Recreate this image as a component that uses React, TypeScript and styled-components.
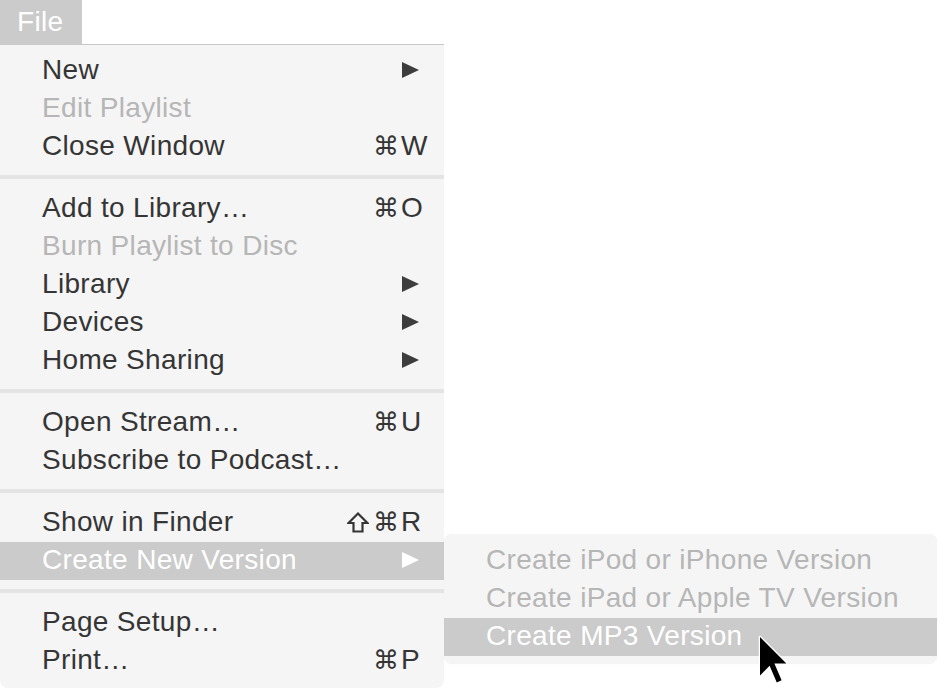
import React from "react";
import styled, { createGlobalStyle } from "styled-components";

const Global = createGlobalStyle`
  html, body { margin: 0; padding: 0; background: #ffffff; }
  body { font-family: "Liberation Sans", "DejaVu Sans", Arial, sans-serif; }
`;

const Page = styled.div`
  position: relative;
  width: 938px;
  height: 688px;
  overflow: hidden;
  background: #ffffff;
  display: flex;
  flex-direction: column;
  align-items: flex-start;
`;

const MenuTitle = styled.div`
  width: 82px;
  height: 44px;
  box-sizing: border-box;
  padding-left: 17px;
  background: #cbcbcb;
  color: #ffffff;
  font-size: 28px;
  line-height: 44px;
  letter-spacing: 0.3px;
`;

const Menu = styled.div<{ $width: number; $padTop: number }>`
  width: ${(p) => p.$width}px;
  box-sizing: border-box;
  background: #f5f5f5;
  padding: ${(p) => p.$padTop}px 0 8px;
  display: flex;
  flex-direction: column;
`;

const MainMenu = styled(Menu)`
  border-top: 1px solid #c8c8c8;
  border-radius: 0 0 8px 8px;
`;

const SubMenu = styled(Menu)`
  position: absolute;
  left: 100%;
  top: -8px;
  border-radius: 8px;
  box-shadow: 0 0 1px rgba(0, 0, 0, 0.06);
`;

const Row = styled.div<{ $disabled?: boolean; $active?: boolean }>`
  position: relative;
  height: 38px;
  box-sizing: border-box;
  padding: 0 17px 2px 42px;
  display: flex;
  align-items: center;
  font-size: 28px;
  line-height: 36px;
  white-space: nowrap;
  color: ${(p) => (p.$active ? "#ffffff" : p.$disabled ? "#b6b6b6" : "#353535")};
  background: ${(p) => (p.$active ? "#cbcbcb" : "transparent")};
`;

const Label = styled.span`
  flex: 1;
  letter-spacing: 0.33px;
`;

const Mods = styled.span`
  display: flex;
  align-items: center;
  gap: 4px;
  font-family: "DejaVu Sans", sans-serif;
  font-size: 26px;
`;

const Key = styled.span`
  width: 28px;
  padding-left: 2px;
  box-sizing: border-box;
  text-align: left;
`;

const ArrowBox = styled.span`
  width: 28px;
  display: flex;
  align-items: center;
  padding-left: 3px;
  box-sizing: border-box;
`;

const Separator = styled.div`
  height: 24px;
  box-sizing: border-box;
  padding-top: 9px;
  &::after {
    content: "";
    display: block;
    height: 4px;
    background: #e4e4e4;
  }
`;

const Cursor = styled.svg`
  position: absolute;
  left: 757px;
  top: 634px;
`;

type Item = {
  label: string;
  disabled?: boolean;
  shift?: boolean;
  cmd?: boolean;
  keyChar?: string;
  arrow?: boolean;
  active?: boolean;
  sub?: Item[];
};

const groups: Item[][] = [
  [
    { label: "New", arrow: true },
    { label: "Edit Playlist", disabled: true },
    { label: "Close Window", cmd: true, keyChar: "W" },
  ],
  [
    { label: "Add to Library…", cmd: true, keyChar: "O" },
    { label: "Burn Playlist to Disc", disabled: true },
    { label: "Library", arrow: true },
    { label: "Devices", arrow: true },
    { label: "Home Sharing", arrow: true },
  ],
  [
    { label: "Open Stream…", cmd: true, keyChar: "U" },
    { label: "Subscribe to Podcast…" },
  ],
  [
    { label: "Show in Finder", shift: true, cmd: true, keyChar: "R" },
    {
      label: "Create New Version",
      arrow: true,
      active: true,
      sub: [
        { label: "Create iPod or iPhone Version", disabled: true },
        { label: "Create iPad or Apple TV Version", disabled: true },
        { label: "Create MP3 Version", active: true },
      ],
    },
  ],
  [
    { label: "Page Setup…" },
    { label: "Print…", cmd: true, keyChar: "P" },
  ],
];

const Triangle = ({ color }: { color: string }) => (
  <svg width="17" height="16" viewBox="0 0 17 16">
    <path d="M0 0 L17 8 L0 16 Z" fill={color} />
  </svg>
);

const ShiftIcon = () => (
  <svg width="22" height="21" viewBox="0 0 22 21" aria-label="Shift">
    <path
      d="M11 1.5 L20.5 11 L15.5 11 L15.5 19.5 L6.5 19.5 L6.5 11 L1.5 11 Z"
      fill="none"
      stroke="#353535"
      strokeWidth="2.2"
      strokeLinejoin="miter"
    />
  </svg>
);

const MenuRow = ({ item }: { item: Item }) => (
  <Row $disabled={item.disabled} $active={item.active}>
    <Label>{item.label}</Label>
    {(item.shift || item.cmd) && (
      <Mods>
        {item.shift && <ShiftIcon />}
        {item.cmd && <span>⌘</span>}
      </Mods>
    )}
    {item.keyChar && <Key>{item.keyChar}</Key>}
    {item.arrow && (
      <ArrowBox>
        <Triangle color={item.active ? "#ffffff" : "#3d3d3d"} />
      </ArrowBox>
    )}
    {item.sub && (
      <SubMenu $width={493} $padTop={8}>
        {item.sub.map((s) => (
          <MenuRow key={s.label} item={s} />
        ))}
      </SubMenu>
    )}
  </Row>
);

export default function App() {
  return (
    <>
      <Global />
      <Page>
        <MenuTitle>File</MenuTitle>
        <MainMenu $width={444} $padTop={7}>
          {groups.map((g, i) => (
            <React.Fragment key={i}>
              {i > 0 && <Separator />}
              {g.map((item) => (
                <MenuRow key={item.label} item={item} />
              ))}
            </React.Fragment>
          ))}
        </MainMenu>
        <Cursor width="34" height="52" viewBox="-3 -3 34 52">
          <path
            d="M0 0 L0 38.4 L9.6 28.8 L16.8 45.6 L21.6 43.2 L14.4 26.4 L26.4 26.4 Z"
            fill="#000000"
            stroke="#ffffff"
            strokeWidth="2.5"
            strokeLinejoin="round"
            paintOrder="stroke"
          />
        </Cursor>
      </Page>
    </>
  );
}
